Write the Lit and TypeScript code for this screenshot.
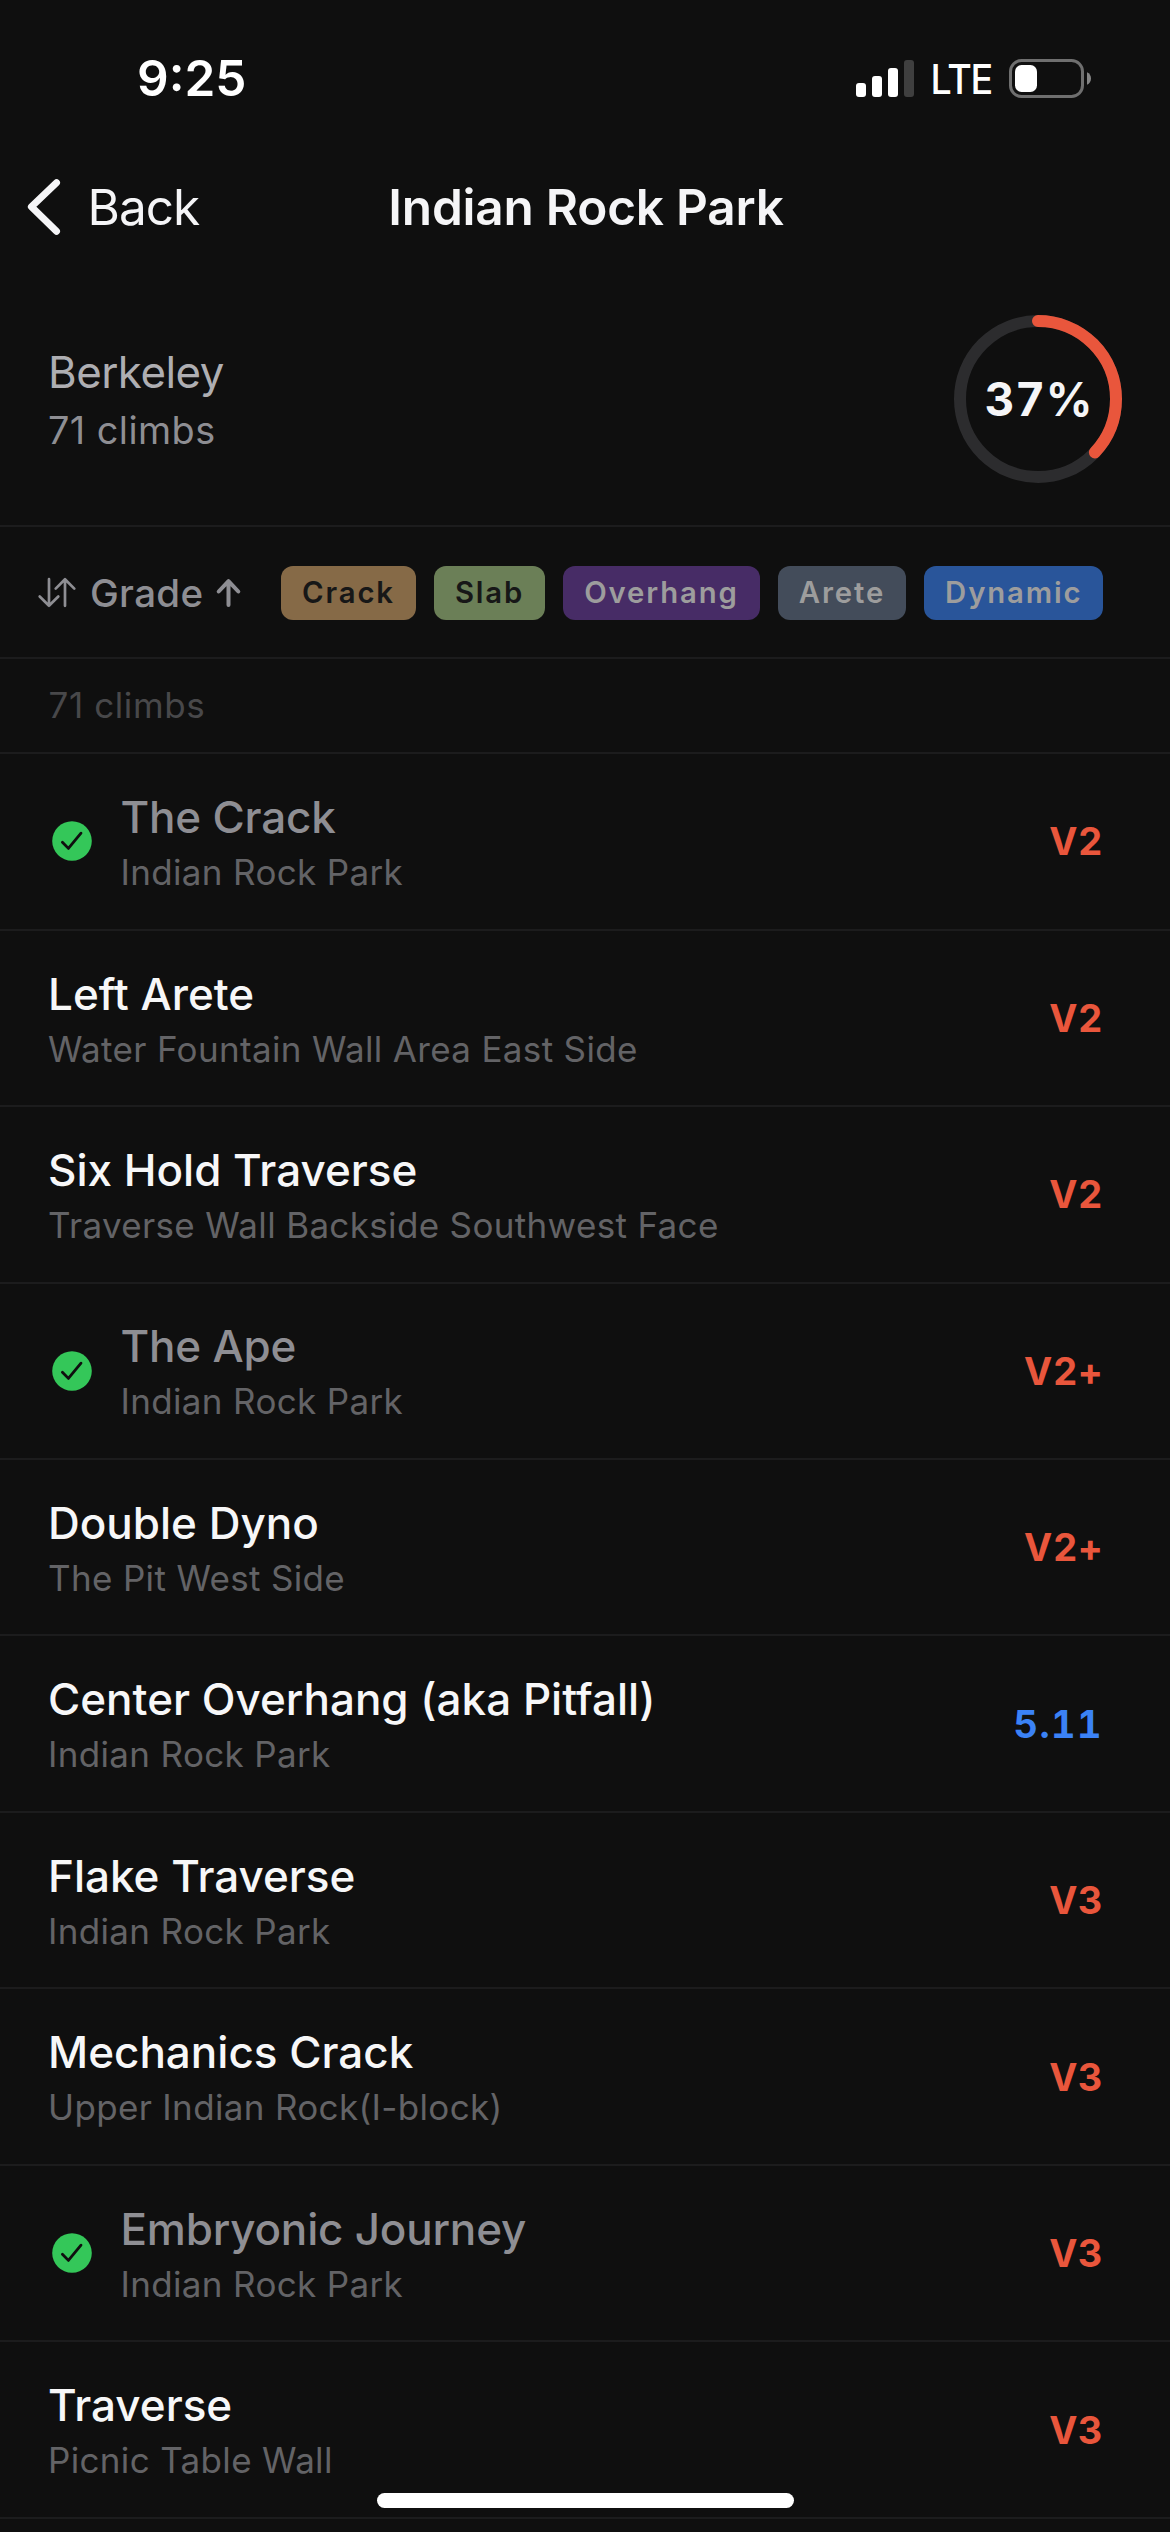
import { LitElement, html, css, svg, nothing } from "lit";
import { customElement, property } from "lit/decorators.js";
import { classMap } from "lit/directives/class-map.js";

interface Climb {
  name: string;
  area: string;
  grade: string;
  sent?: boolean;
  rope?: boolean;
}

const CLIMBS: Climb[] = [
  { name: "The Crack", area: "Indian Rock Park", grade: "V2", sent: true },
  { name: "Left Arete", area: "Water Fountain Wall Area East Side", grade: "V2" },
  { name: "Six Hold Traverse", area: "Traverse Wall Backside Southwest Face", grade: "V2" },
  { name: "The Ape", area: "Indian Rock Park", grade: "V2+", sent: true },
  { name: "Double Dyno", area: "The Pit West Side", grade: "V2+" },
  { name: "Center Overhang (aka Pitfall)", area: "Indian Rock Park", grade: "5.11", rope: true },
  { name: "Flake Traverse", area: "Indian Rock Park", grade: "V3" },
  { name: "Mechanics Crack", area: "Upper Indian Rock(I-block)", grade: "V3" },
  { name: "Embryonic Journey", area: "Indian Rock Park", grade: "V3", sent: true },
  { name: "Traverse", area: "Picnic Table Wall", grade: "V3" },
];

const TAGS = ["Crack", "Slab", "Overhang", "Arete", "Dynamic"];

@customElement("status-bar")
class StatusBar extends LitElement {
  static styles = css`
    :host {
      display: flex;
      align-items: center;
      height: 156px;
      padding: 0 79px 0 137px;
      color: #fff;
    }
    .time {
      flex: 1;
      font-size: 49.5px;
      font-weight: 600;
    }
    .signal {
      display: block;
      width: 58px;
      height: 37px;
    }
    .carrier {
      width: 95px;
      box-sizing: border-box;
      padding: 3px 0 0 16.5px;
      font-size: 40.5px;
      font-weight: 500;
      letter-spacing: -1.2px;
      transform: scaleX(0.93);
      transform-origin: 16.5px 50%;
    }
    .battery {
      display: block;
      width: 82px;
      height: 39px;
    }
  `;
  render() {
    return html`
      <span class="time">9:25</span>
      <svg class="signal" viewBox="0 0 58 37" fill="#fff">
        <rect x="0" y="23" width="10" height="14" rx="3" />
        <rect x="16" y="16" width="10" height="21" rx="3" />
        <rect x="32" y="8" width="10" height="29" rx="3" />
        <rect x="48" y="0" width="10" height="37" rx="3" fill="#3f3f3f" />
      </svg>
      <span class="carrier">LTE</span>
      <svg class="battery" viewBox="0 0 82 39">
        <rect x="1.5" y="1.5" width="72" height="36" rx="11" fill="none" stroke="#6f6f6f" stroke-width="3" />
        <rect x="6" y="6" width="22" height="27" rx="6.5" fill="#fff" />
        <path d="M78 13.2c2.6 1 4 3.4 4 6.3s-1.4 5.3-4 6.3z" fill="#858585" />
      </svg>
    `;
  }
}

@customElement("progress-ring")
class ProgressRing extends LitElement {
  @property({ type: Number }) value = 0;
  static styles = css`
    :host {
      display: grid;
      place-items: center;
      width: 168px;
      height: 168px;
    }
    .ring,
    .label {
      grid-area: 1 / 1;
    }
    .ring {
      display: block;
      width: 168px;
      height: 168px;
      transform: rotate(-90deg);
    }
    .label {
      padding-left: 2px;
      font-size: 46px;
      font-weight: 700;
      font-variant-numeric: tabular-nums;
      letter-spacing: 0.8px;
      color: #f5f5f7;
    }
  `;
  render() {
    return html`
      <svg class="ring" viewBox="0 0 168 168" fill="none" stroke-width="12">
        <circle cx="84" cy="84" r="78" stroke="#2c2c2e" />
        <circle cx="84" cy="84" r="78" stroke="#e9563c" stroke-linecap="round" pathLength="100"
          stroke-dasharray="${this.value} 100" />
      </svg>
      <span class="label">${this.value}%</span>
    `;
  }
}

@customElement("climb-row")
class ClimbRow extends LitElement {
  @property({ attribute: false }) climb!: Climb;
  static styles = css`
    :host {
      display: flex;
      align-items: center;
      height: 176.47px;
      box-sizing: border-box;
      border-bottom: 2px solid #1c1c1d;
      padding: 0 67px 0 48px;
    }
    .check {
      display: block;
      width: 48px;
      height: 48px;
      margin-right: 24.5px;
    }
    .text {
      flex: 1;
      padding-top: 2px;
    }
    .name {
      font-size: 44px;
      line-height: 60px;
      font-weight: 500;
      color: #f7f7f8;
    }
    .sent .name {
      letter-spacing: -0.2px;
      color: #8e8e93;
    }
    .area {
      font-size: 35px;
      line-height: 50.6px;
      letter-spacing: 0.34px;
      color: #636366;
    }
    .grade {
      font-size: 37.8px;
      font-weight: 700;
      font-variant-numeric: tabular-nums;
      letter-spacing: 0.6px;
      color: #e9563c;
    }
    .rope {
      letter-spacing: 1.5px;
      color: #3b82f6;
    }
  `;
  render() {
    const c = this.climb;
    return html`
      ${c.sent
        ? svg`<svg class="check" viewBox="0 0 48 48" fill="none">
            <circle cx="24" cy="24" r="19.8" fill="#34c759" />
            <path d="M14.4 25.2l6 6.2L33 16.2" stroke="#0f0f0f" stroke-width="2.8" stroke-linecap="round" stroke-linejoin="round" />
          </svg>`
        : nothing}
      <div class=${classMap({ text: true, sent: !!c.sent })}>
        <div class="name">${c.name}</div>
        <div class="area">${c.area}</div>
      </div>
      <span class=${classMap({ grade: true, rope: !!c.rope })}>${c.grade}</span>
    `;
  }
}

@customElement("app-root")
class AppRoot extends LitElement {
  static styles = css`
    :host {
      display: block;
      position: relative;
      height: 2532px;
      overflow: hidden;
      background: #0f0f0f;
      color: #f5f5f7;
      font-family: Inter, "Liberation Sans", sans-serif;
      white-space: nowrap;
    }
    .nav {
      display: grid;
      grid-template-columns: 1fr auto 1fr;
      align-items: center;
      height: 102px;
      padding: 0 25px;
      font-size: 49.5px;
    }
    .back {
      display: flex;
      align-items: center;
      letter-spacing: -0.95px;
    }
    .chevron {
      display: block;
      width: 38px;
      height: 60px;
      margin-right: 24.5px;
    }
    .title {
      font-weight: 600;
      letter-spacing: -0.22px;
      padding-left: 2px;
    }
    .summary {
      display: flex;
      align-items: center;
      justify-content: space-between;
      padding: 57px 48px 42px;
      border-bottom: 2px solid #1c1c1d;
    }
    .place {
      padding-top: 2.6px;
    }
    .city {
      font-size: 43.8px;
      line-height: 60px;
      letter-spacing: -0.5px;
      color: #aeaeb2;
    }
    .total {
      font-size: 37.8px;
      line-height: 54.4px;
      letter-spacing: 0.45px;
      color: #8e8e93;
    }
    .filters {
      display: flex;
      align-items: center;
      height: 128px;
      padding: 2px 0 0 36px;
      border-bottom: 2px solid #1c1c1d;
    }
    .sort {
      display: flex;
      align-items: center;
      width: 245px;
      color: #8e8e93;
    }
    .swap {
      width: 42px;
      height: 40px;
      margin-right: 12px;
    }
    .sortby {
      font-size: 38.5px;
      font-weight: 500;
      letter-spacing: 0.33px;
    }
    .dir {
      width: 33px;
      height: 40px;
      margin-left: 8.5px;
    }
    .tags {
      display: flex;
      gap: 18px;
    }
    .tag {
      height: 54px;
      line-height: 54px;
      border-radius: 12px;
      padding: 0 21px;
      font-size: 29.3px;
      font-weight: 600;
      letter-spacing: 1.87px;
      color: #9d9d9d;
    }
    .crack {
      background: #866a47;
      color: #171717;
    }
    .slab {
      background: #6b7f57;
      color: #171717;
    }
    .overhang {
      background: #472c66;
    }
    .arete {
      background: #434c5a;
    }
    .dynamic {
      background: #29559a;
    }
    .count {
      height: 93.1px;
      line-height: 93px;
      padding-left: 48.5px;
      border-bottom: 2px solid #1c1c1d;
      font-size: 35px;
      letter-spacing: 0.6px;
      color: #48484a;
    }
    .home {
      position: absolute;
      left: 50%;
      bottom: 24px;
      width: 417px;
      height: 15px;
      margin-left: -208px;
      border-radius: 7.5px;
      background: #fff;
    }
  `;
  render() {
    return html`
      <status-bar></status-bar>
      <nav class="nav">
        <div class="back">
          <svg class="chevron" viewBox="0 0 38 60" fill="none">
            <path d="M31.5 5.7L6.4 29.7L31.5 54.3" stroke="#f5f5f7" stroke-width="7" stroke-linecap="round" stroke-linejoin="round" />
          </svg>
          <span>Back</span>
        </div>
        <div class="title">Indian Rock Park</div>
      </nav>
      <section class="summary">
        <div class="place">
          <div class="city">Berkeley</div>
          <div class="total">71 climbs</div>
        </div>
        <progress-ring .value=${37}></progress-ring>
      </section>
      <section class="filters">
        <div class="sort">
          <svg class="swap" viewBox="0 0 42 40" fill="none" stroke="currentColor" stroke-width="2.7" stroke-linecap="round" stroke-linejoin="round">
            <path d="M13 6.2v26.5M3.7 23.5l9.3 9.3 9.3-9.3M29 32.8V6.3M19.7 15.6l9.3-9.3 9.3 9.3" />
          </svg>
          <span class="sortby">Grade</span>
          <svg class="dir" viewBox="0 0 33 40" fill="none" stroke="currentColor" stroke-width="4" stroke-linecap="round" stroke-linejoin="round">
            <path d="M16.5 32V8.5M6.7 18.5l9.8-10.4 9.8 10.4" />
          </svg>
        </div>
        <div class="tags">
          ${TAGS.map((t) => html`<span class="tag ${t.toLowerCase()}">${t}</span>`)}
        </div>
      </section>
      <div class="count">71 climbs</div>
      ${CLIMBS.map((c) => html`<climb-row .climb=${c}></climb-row>`)}
      <div class="home"></div>
    `;
  }
}
